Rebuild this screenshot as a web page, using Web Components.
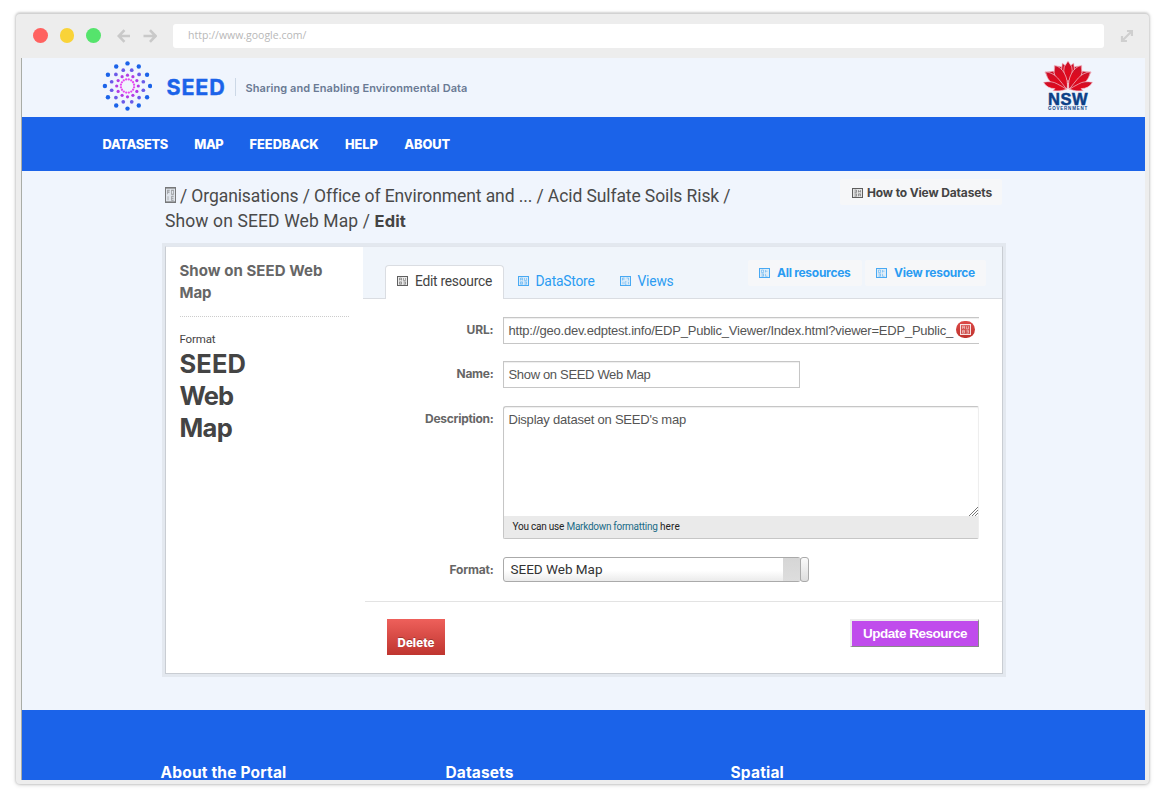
<!DOCTYPE html>
<html lang="en">
<head>
<meta charset="utf-8">
<title>SEED - Edit resource</title>
<style>
html,body{margin:0;background:#fff;height:800px;overflow:hidden}
body{font-family:Roboto,"Liberation Sans",sans-serif;color:#444}
</style>
</head>
<body>
<browser-window address="http://www.google.com/">
  <seed-header></seed-header>
  <seed-nav></seed-nav>
  <seed-main>
    <bread-crumbs slot="crumbs"></bread-crumbs>
    <soft-button slot="help" id="help" tone="dark"><tofu-icon kind="1"></tofu-icon><fit-text w="125">How to View Datasets</fit-text></soft-button>
    <resource-card></resource-card>
  </seed-main>
  <seed-footer></seed-footer>
</browser-window>
<script>
function define(name, html, setup) {
  const tpl = document.createElement('template');
  tpl.innerHTML = html;
  customElements.define(name, class extends HTMLElement {
    connectedCallback() {
      if (this.shadowRoot) return;
      this.attachShadow({mode: 'open'}).append(tpl.content.cloneNode(true));
      if (setup) setup(this, this.shadowRoot);
    }
  });
}

// A single line whose tracking is adjusted to occupy "w" pixels.
define('fit-text', `<style>:host{display:inline-block;white-space:nowrap}span{display:inline-block}</style><span><slot></slot></span>`,
  (el, root) => {
    const span = root.querySelector('span');
    const n = el.textContent.length;
    const fit = () => {
      span.style.letterSpacing = '0px';
      const w = span.getBoundingClientRect().width;
      if (w) span.style.letterSpacing = ((+el.getAttribute('w') - w) / n).toFixed(3) + 'px';
    };
    fit();
    requestAnimationFrame(fit);
  });

// Missing-glyph box with four tiny hex digits.
define('tofu-icon', `<style>:host{display:inline-block;width:11px;height:10px;flex:none}svg{display:block;width:100%;height:100%}</style>
<svg viewBox="0 0 11 10" preserveAspectRatio="none" fill="none" stroke="currentColor"><rect x=".5" y=".5" width="10" height="9" opacity=".85" fill="currentColor" fill-opacity=".12"/><path stroke-width=".7" opacity=".6"/></svg>`,
  (el, root) => {
    const kinds = [
      'M2.5 4.5V2h2.2M2.5 3.2h2M6.5 2h2v2.500h-2zM3 5.800V8.300M6.500 5.800h2.200M6.500 5.800V8.300h2.200M6.500 7h2',
      'M2.5 2h2v2.500h-2M2.500 3.200h2M6.500 4.500V2M8.500 4.500V2M6.500 3.500h2M2.500 5.800h2v2.500h-2M2.500 7h2M6.500 8.300V5.800h2v2.500M6.500 7h2',
      'M2.500 4.500V2h2v2.500M2.500 3.300h2M6.500 2v2.500h2V2M2.500 5.800h2v2.500h-2zM2.500 7h2M6.500 5.800h2v2.500h-2M6.500 7h2',
      'M2.500 4.500V2h2M2.500 3.200h2M6.500 2h2v2.500M3 5.800v2.500M6.500 5.800h-1.500v2.500h1.500M8.500 5.800v2.500',
      'M2.500 2h2v2.500h-2zM6.500 4.500V2M6.500 3.200h2M2.500 5.800h2v2.500h-2M2.500 7h2M6.500 5.800v2.500h2'
    ];
    root.querySelector('path').setAttribute('d', kinds[+(el.getAttribute('kind') || 0)]);
  });

define('soft-button', `<style>
:host{display:flex;box-sizing:border-box;align-items:center;height:26px;background:#f6f7f9;border-radius:2px;padding-left:11px;font-family:Inter,sans-serif;font-weight:700;font-size:12px;line-height:16px;color:#2b9cf2;gap:7px}
:host([tone=dark]){color:#444;width:162px;gap:4px;font-size:12px;padding:2px 0 0 12px}
</style><slot></slot>`);

define('browser-window', `<style>
:host{display:block;padding:13px 15px 0 16px}
.frame{height:771px;box-sizing:border-box;background:#ededed;border-radius:4px;box-shadow:0 0 2px 1px rgba(0,0,0,.13),0 1px 5px rgba(0,0,0,.14),inset 0 1px 0 #d2d2d2;padding:0 4px 4px 5px}
.bar{display:flex;align-items:center;height:45px;padding:0 11px 0 12px}
.dot{width:15px;height:15px;border-radius:50%;margin-right:11.600px;background:var(--c)}
.arr{width:14px;height:14px;margin-right:13px}
.arr:first-of-type{margin-left:4px}
.url{flex:none;width:931px;box-sizing:border-box;height:24px;margin-left:2.700px;background:#fff;border-radius:3px;padding-left:15px;font:10.500px/23px "Open Sans",sans-serif;color:#b8b8b8}
.exp{margin-left:16px;width:14px;height:14px}
.page{height:722px;overflow:hidden;border-left:1px solid #a9aca6;box-sizing:border-box;background:#f0f5fd;width:1123.500px}
</style>
<div class="frame"><div class="bar">
<i class="dot" style="--c:#ff6260"></i><i class="dot" style="--c:#f9d338"></i><i class="dot" style="--c:#55e46c"></i>
<svg class="arr" viewBox="0 0 14 14" fill="none" stroke="#c9c9c9" stroke-width="2.600"><path d="M7.500 1 1.800 7l5.700 6M2 7h12"/></svg>
<svg class="arr" viewBox="0 0 14 14" fill="none" stroke="#c9c9c9" stroke-width="2.600"><path d="m7 1 5.700 6L7 13M12.500 7H.5"/></svg>
<div class="url"><fit-text w="112" id="a"></fit-text></div>
<svg class="exp" viewBox="0 0 14 14" fill="none" stroke="#cfcfcf" stroke-width="2.200"><path d="M7 2h5v5M2 7v5h5M12 2 2 12"/></svg>
</div><div class="page"><slot></slot></div></div>`,
  (el, root) => { root.getElementById('a').textContent = el.getAttribute('address'); });

define('seed-logo', `<style>:host{display:block;width:50px;height:50px}svg{display:block}</style><svg width="50" height="50" viewBox="-25.500 -25 50 50"></svg>`,
  (el, root) => {
    let s = '';
    for (const [n, off, r, size, c] of [[12,0,22.600,2.200,'#1b63e9'],[12,15,16.400,1.850,'#6b5ae8'],[12,0,10.800,1.600,'#b33be6'],[16,11,6.700,1.150,'#e84bf0']])
      for (let i = 0; i < n; i++) {
        const a = (off + i * 360 / n) * Math.PI / 180;
        s += `<circle cx="${(r*Math.sin(a)).toFixed(2)}" cy="${(-r*Math.cos(a)).toFixed(2)}" r="${size}" fill="${c}"/>`;
      }
    root.querySelector('svg').innerHTML = s;
  });

define('nsw-logo', `<style>
:host{display:flex;flex-direction:column;align-items:center;width:50px;color:#0c3f86;font-family:"Liberation Sans",sans-serif;font-weight:700}
svg{display:block}
.n{font-size:16.500px;line-height:12px;height:12px;margin-top:1px;-webkit-text-stroke:.5px}
.g{font-size:4.500px;line-height:5px;height:5px;margin-top:1px}
</style>
<svg width="50" height="31" viewBox="0 0 148 92"><defs><linearGradient id="g" x1="0" y1="0" x2="0" y2="1"><stop offset="0" stop-color="#c8102a"/><stop offset=".55" stop-color="#e00a1e"/><stop offset="1" stop-color="#d00c24"/></linearGradient></defs><g fill="url(#g)" stroke="#f3cdd6" stroke-width="2" stroke-linejoin="round">
<path d="M5 33 32 30 40 60 18 56zM143 33 116 30 108 60 130 56z"/>
<path d="M33 13 56 17 60 60 34 56zM115 13 92 17 88 60 114 56z"/>
<path d="M57 6 74 20 91 6 96 50 74 66 52 50z"/>
<path d="M74 0 85 17Q91 40 74 62 57 40 63 17z"/>
<path d="M35 13Q54 18 64 38 74 56 72 82 46 78 38 55 29 34 35 13zM113 13Q94 18 84 38 74 56 76 82 102 78 110 55 119 34 113 13z"/>
<path d="M7 32Q28 34 43 50 57 66 70 84 40 84 26 68 10 50 7 32zM141 32Q120 34 105 50 91 66 78 84 108 84 122 68 138 50 141 32z"/>
<path d="M1 63Q26 58 42 68 58 76 70 84 50 92 29 88L35 82Q12 82 1 63zM147 63Q122 58 106 68 90 76 78 84 98 92 119 88L113 82Q136 82 147 63z"/></g></svg>
<div class="n"><fit-text w="40">NSW</fit-text></div><div class="g"><fit-text w="40">GOVERNMENT</fit-text></div>`);

define('seed-header', `<style>
:host{display:flex;box-sizing:border-box;height:59px;padding:3px 51.500px 0 80px;align-items:flex-start}
.name{font:700 21.500px/24px Inter,sans-serif;color:#1b63e9;-webkit-text-stroke:.4px;margin:14px 0 0 14.500px}
.sep{width:1px;height:18px;background:#ccd8e6;margin:17px 9px 0 9.500px}
.tag{font:600 11px/16px Inter,sans-serif;color:#6a7a94;margin:18.500px 0 0 .5px}
nsw-logo{margin-left:auto}
</style><seed-logo></seed-logo><div class="name"><fit-text w="59">SEED</fit-text></div><i class="sep"></i><div class="tag"><fit-text w="222">Sharing and Enabling Environmental Data</fit-text></div><nsw-logo></nsw-logo>`);

define('seed-nav', `<style>
:host{display:flex;align-items:center;height:54px;box-sizing:border-box;background:#1b63e9;padding:2px 0 0 80.500px;gap:26.300px;color:#fff;font-family:Inter,sans-serif;font-weight:800;font-size:12.800px;line-height:18px}
</style><fit-text w="65.500">DATASETS</fit-text><fit-text w="29">MAP</fit-text><fit-text w="69">FEEDBACK</fit-text><fit-text w="33">HELP</fit-text><fit-text w="46">ABOUT</fit-text>`);

define('seed-main', `<style>
:host{display:block;box-sizing:border-box;height:539px;padding:8px 142px 0 143px}
.top{display:flex;justify-content:space-between;width:837px;height:67px}
</style><div class="top"><slot name="crumbs"></slot><slot name="help"></slot></div><slot></slot>`);

define('bread-crumbs', `<style>
:host{display:block;font-size:17.500px;line-height:25px;padding-top:5px;color:#4a4a4a}
div{display:flex;height:25px}
tofu-icon{width:11px;height:16px;margin:3px 4px 0 0;opacity:.85}
b{color:#444;font:700 16.500px Inter,sans-serif}
</style><div><tofu-icon></tofu-icon><fit-text w="549">/ Organisations / Office of Environment and ... / Acid Sulfate Soils Risk /</fit-text></div><div><fit-text w="241">Show on SEED Web Map / <b>Edit</b></fit-text></div>`);

define('resource-card', `<style>
:host{display:flex;box-sizing:border-box;width:838px;height:428px;background:#fff;border:1px solid #c9cdd3;border-top-color:#e2e6ed;box-shadow:0 0 0 3px #e3e8ef}
resource-form{flex:1}
</style><resource-side></resource-side><resource-form></resource-form>`);

define('resource-side', `<style>
:host{display:block;box-sizing:border-box;width:197px;padding:13px 14px 0 13.500px}
.t{font-family:Inter,sans-serif;font-weight:700;font-size:15px;line-height:21.500px;color:#666;padding-bottom:13px;border-bottom:1px dotted #ccc}
.f{font-size:11.500px;line-height:14px;margin-top:15px;color:#444}
.v{font-family:Inter,sans-serif;font-weight:700;font-size:25.500px;line-height:32px;color:#444;margin-top:2px}
.t div,.v div{display:flex}
</style><div class="t"><div><fit-text w="143">Show on SEED Web</fit-text></div><div><fit-text w="32">Map</fit-text></div></div>
<div class="f"><fit-text w="36">Format</fit-text></div>
<div class="v"><div><fit-text w="66.500">SEED</fit-text></div><div><fit-text w="53.500">Web</fit-text></div><div><fit-text w="52.500">Map</fit-text></div></div>`);

define('resource-tabs', `<style>
:host{display:flex;box-sizing:border-box;height:52px;background:#f0f5fb;border-bottom:1px solid #dadde2;padding-left:22px;align-items:flex-end;color:#2b9cf2;font-size:13.800px;line-height:16px}
.tab{display:flex;align-items:center;box-sizing:border-box;gap:7px;height:33px;margin-right:25px;padding-bottom:2px}
.on{width:119px;height:34px;margin:0 13.500px -1px 0;border:1px solid #dadde2;border-bottom:0;border-radius:4px 4px 0 0;background:#fff;color:#444;padding:0 0 3px 11px}
.acts{display:flex;gap:3px;margin:0 16px 12px auto}
#r1{width:114px}#r2{width:121px}
</style><div class="tab on"><tofu-icon kind="2"></tofu-icon><fit-text w="77">Edit resource</fit-text></div>
<div class="tab"><tofu-icon kind="2"></tofu-icon><fit-text w="59">DataStore</fit-text></div>
<div class="tab"><tofu-icon kind="3"></tofu-icon><fit-text w="36">Views</fit-text></div>
<div class="acts"><soft-button id="r1"><tofu-icon kind="4"></tofu-icon><fit-text w="73.500">All resources</fit-text></soft-button><soft-button id="r2"><tofu-icon kind="4"></tofu-icon><fit-text w="81">View resource</fit-text></soft-button></div>`);

define('form-row', `<style>
:host{display:grid;grid-template-columns:130.500px 1fr;column-gap:9.500px}
.l{display:flex;justify-content:flex-end;font-family:Inter,sans-serif;font-weight:700;font-size:12px;line-height:16px;padding-top:5px;color:#666}
</style><div class="l"><slot name="label"></slot></div><div><slot></slot></div>`);

define('resource-form', `<style>
:host{display:block;font-family:Roboto,sans-serif}
.form{padding:18px 0 0}
form-row{margin-bottom:18px}
form-row:first-child{margin-bottom:17px}
.in{display:flex;align-items:center;box-sizing:border-box;height:27px;border:1px solid #c6c6c6;box-shadow:inset 0 1px 1px rgba(0,0,0,.07);padding-left:4.500px;font:13px/16px "Liberation Sans",sans-serif;color:#555;width:297px}
.name{padding-top:1px}
.url{width:476px;border-right:0}
.x{display:flex;align-items:center;justify-content:center;width:19px;height:17px;border-radius:9px;background:linear-gradient(#dc4a48,#bf322d);color:#fff;margin:-2px 0 0 2.500px}
.x tofu-icon{height:11px}
.area{position:relative;box-sizing:border-box;width:476px;height:133px;border:1px solid #c6c6c6;border-right-color:#eee;border-radius:3px 2px 2px 2px;box-shadow:inset 0 1px 1px rgba(0,0,0,.07);display:flex;flex-direction:column;justify-content:space-between;color:#555;font:13px/16px "Liberation Sans",sans-serif}
.txt{padding:5px 4.500px}
.grip{position:absolute;right:0;bottom:22px}
.hint{height:22px;box-sizing:border-box;background:#eaeaea;padding:1px 0 0 8.500px;font:10px/20px Roboto,sans-serif;color:#222;display:flex;white-space:pre}
.hint .md{color:#216a87}
.sel{display:flex}
.box{display:flex;box-sizing:border-box;width:298px;height:25px;border:1px solid #aaa;border-radius:3px;background:linear-gradient(#fff 55%,#ebebeb);font-size:13.500px;line-height:22px;padding-left:6.500px;color:#333;justify-content:space-between}
.box i{width:17px;background:linear-gradient(#d6d6d6,#ddd)}
.knob{box-sizing:border-box;width:9px;margin-left:-1px;height:25px;border:1px solid #aaa;border-radius:3px;background:linear-gradient(#fafafa,#ddd)}
.act{display:flex;justify-content:space-between;align-items:flex-start;border-top:1px solid #e3e3e3;margin:19px 0 0 2px;padding:17px 23px 0 22px}
.del{display:flex;box-sizing:border-box;width:58px;height:36px;background:linear-gradient(#ee605b,#bf352f);color:#fff;font-family:Inter,sans-serif;font-weight:800;font-size:11.500px;line-height:16px;padding:16px 0 0 10.500px;text-shadow:0 -1px 0 rgba(0,0,0,.25)}
.upd{display:flex;box-sizing:border-box;width:129px;height:28px;background:#c04cec;border:2px solid #ececec;border-width:2px 1px 1px 2px;border-right-color:#888;border-bottom-color:#888;color:#fff;font:700 13.500px/16px "Liberation Sans",sans-serif;padding:5px 0 0 11px}
</style><resource-tabs></resource-tabs>
<div class="form">
<form-row><fit-text slot="label" w="27">URL:</fit-text><div class="in url"><fit-text w="444.500">http://geo.dev.edptest.info/EDP_Public_Viewer/Index.html?viewer=EDP_Public_</fit-text><span class="x"><tofu-icon kind="2"></tofu-icon></span></div></form-row>
<form-row><fit-text slot="label" w="37">Name:</fit-text><div class="in name"><fit-text w="142">Show on SEED Web Map</fit-text></div></form-row>
<form-row><fit-text slot="label" w="68.500">Description:</fit-text><div class="area"><div class="txt"><fit-text w="177.500">Display dataset on SEED's map</fit-text></div><svg class="grip" width="9" height="9" viewBox="0 0 9 9" stroke="#666" stroke-width=".9"><path d="M0 9 9 0M3 9l6-6M6 9l3-3"/></svg><div class="hint"><fit-text w="51.500">You can use</fit-text><span> </span><fit-text class="md" w="91">Markdown formatting</fit-text><span> </span><fit-text w="20">here</fit-text></div></div></form-row>
<form-row><fit-text slot="label" w="44">Format:</fit-text><div class="sel"><div class="box"><fit-text w="92">SEED Web Map</fit-text><i></i></div><i class="knob"></i></div></form-row>
</div>
<div class="act"><div class="del"><fit-text w="37">Delete</fit-text></div><div class="upd"><fit-text w="104">Update Resource</fit-text></div></div>`);

define('seed-footer', `<style>
:host{display:grid;grid-template-columns:285px 285px 1fr;box-sizing:border-box;height:90px;padding:53px 0 0 138.500px;background:#1b63e9;color:#fff;font-family:Inter,sans-serif;font-weight:700;font-size:15.500px;line-height:20px}
</style><div><fit-text w="126">About the Portal</fit-text></div><div><fit-text w="68">Datasets</fit-text></div><div><fit-text w="53.500">Spatial</fit-text></div>`);
</script>
</body>
</html>
